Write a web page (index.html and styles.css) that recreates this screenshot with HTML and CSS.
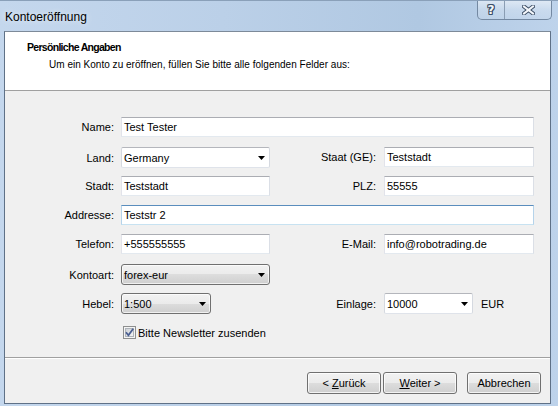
FILE: index.html
```html
<!DOCTYPE html>
<html lang="de">
<head>
<meta charset="utf-8">
<title>Kontoeröffnung</title>
<link rel="stylesheet" href="styles.css">
</head>
<body>
<div class="window">
  <div class="titlebar">
    <span class="title">Kontoeröffnung</span>
    <div class="caps">
      <div class="cap help"><span class="qmark">?</span></div>
      <div class="cap close">
        <svg width="13" height="10" viewBox="0 0 13 10">
          <line x1="2" y1="1.5" x2="11" y2="8.5" stroke="#3d4f66" stroke-width="4" stroke-linecap="square"/>
          <line x1="11" y1="1.5" x2="2" y2="8.5" stroke="#3d4f66" stroke-width="4" stroke-linecap="square"/>
          <line x1="2" y1="1.5" x2="11" y2="8.5" stroke="#f4f7fb" stroke-width="2" stroke-linecap="square"/>
          <line x1="11" y1="1.5" x2="2" y2="8.5" stroke="#f4f7fb" stroke-width="2" stroke-linecap="square"/>
        </svg>
      </div>
    </div>
  </div>
  <div class="client">
    <div class="header">
      <div class="h-title">Persönliche Angaben</div>
      <div class="h-sub">Um ein Konto zu eröffnen, füllen Sie bitte alle folgenden Felder aus:</div>
    </div>
    <div class="content">
      <div class="form">
        <div class="lbl r1">Name:</div>
        <div class="tb span3 r1">Test Tester</div>

        <div class="lbl h21 r2">Land:</div>
        <div class="combo white r2"><span>Germany</span><svg class="arr" width="7" height="4" viewBox="0 0 7 4"><polygon points="0,0 7,0 3.5,4" fill="#000"/></svg></div>
        <div class="lbl lbl2 r2">Staat (GE):</div>
        <div class="tb r2">Teststadt</div>

        <div class="lbl r3">Stadt:</div>
        <div class="tb r3">Teststadt</div>
        <div class="lbl lbl2 r3">PLZ:</div>
        <div class="tb r3">55555</div>

        <div class="lbl r4">Addresse:</div>
        <div class="tb focus span3 r4">Teststr 2</div>

        <div class="lbl r5">Telefon:</div>
        <div class="tb r5">+555555555</div>
        <div class="lbl lbl2 r5">E-Mail:</div>
        <div class="tb r5">info@robotrading.de</div>

        <div class="lbl h21 r6">Kontoart:</div>
        <div class="combo btn r6"><span>forex-eur</span><svg class="arr" width="7" height="4" viewBox="0 0 7 4"><polygon points="0,0 7,0 3.5,4" fill="#000"/></svg></div>

        <div class="lbl h21 r7">Hebel:</div>
        <div class="combo btn w90 r7"><span>1:500</span><svg class="arr" width="7" height="4" viewBox="0 0 7 4"><polygon points="0,0 7,0 3.5,4" fill="#000"/></svg></div>
        <div class="lbl lbl2 h21 r7">Einlage:</div>
        <div class="einlage r7">
          <div class="combo white w89"><span>10000</span><svg class="arr" width="7" height="4" viewBox="0 0 7 4"><polygon points="0,0 7,0 3.5,4" fill="#000"/></svg></div>
          <span class="eur">EUR</span>
        </div>

        <div class="check span3 r8">
          <svg width="13" height="13" viewBox="0 0 13 13">
            <defs>
              <linearGradient id="cbg" x1="0" y1="0" x2="1" y2="1">
                <stop offset="0" stop-color="#cbcfd5"/>
                <stop offset="1" stop-color="#f6f6f6"/>
              </linearGradient>
            </defs>
            <rect x="0.5" y="0.5" width="12" height="12" fill="#f4f4f4" stroke="#8e8f8f"/>
            <rect x="2.5" y="2.5" width="8" height="8" fill="url(#cbg)" stroke="#aeb3b9"/>
            <path d="M3 6.3 L5.4 9.2 L10.2 2.8" fill="none" stroke="#4a5f92" stroke-width="1.8"/>
          </svg>
          <span class="check-lbl">Bitte Newsletter zusenden</span>
        </div>
      </div>
    </div>
    <div class="footer">
      <div class="button"><span>&lt; <u>Z</u>urück</span></div>
      <div class="button next"><span><u>W</u>eiter &gt;</span></div>
      <div class="button cancel"><span>Abbrechen</span></div>
    </div>
  </div>
</div>
</body>
</html>
```
FILE: styles.css
```css
* { box-sizing: border-box; }
html, body { margin: 0; padding: 0; }
body {
  width: 558px;
  height: 406px;
  overflow: hidden;
  font-family: "Liberation Sans", Arial, sans-serif;
  font-size: 11px;
  color: #000;
}
.window {
  width: 558px;
  height: 406px;
  display: flex;
  flex-direction: column;
  background: linear-gradient(to right, #c4d7ed 0%, #bbd0e8 40%, #b0c8e2 75%, #bed3eb 100%);
  border-top: 1px solid #8aa0b9;
}
.titlebar {
  height: 30px;
  display: flex;
  align-items: flex-start;
}
.title {
  font-size: 12px;
  line-height: 15px;
  margin: 9px 0 0 5px;
  color: #000;
  text-shadow: 0 0 6px rgba(255,255,255,0.8);
}
.caps {
  display: flex;
  height: 19px;
  margin-left: auto;
  margin-right: 6px;
  border: 1px solid #7489a2;
  border-top: 0;
  border-radius: 0 0 5px 5px;
  background: linear-gradient(rgba(255,255,255,0.5), rgba(255,255,255,0.2) 50%, rgba(255,255,255,0.1));
  overflow: hidden;
}
.cap {
  display: flex;
  align-items: center;
  justify-content: center;
}
.help {
  width: 27px;
  border-right: 1px solid #8a9db3;
}
.close { width: 46px; }
.qmark {
  font-family: "DejaVu Sans", sans-serif;
  font-weight: bold;
  font-size: 12px;
  line-height: 12px;
  color: #f4f7fb;
  text-shadow: 1px 0 #3d4f66, -1px 0 #3d4f66, 0 1px #3d4f66, 0 -1px #3d4f66,
               1px 1px #3d4f66, -1px -1px #3d4f66, 1px -1px #3d4f66, -1px 1px #3d4f66;
}
.client {
  flex: 1;
  margin: 0 7px 2px 4px;
  border: 1px solid #5f7187;
  border-top-color: #7d8a99;
  display: flex;
  flex-direction: column;
  background: #f0f0f0;
}
.header {
  height: 59px;
  background: #fff;
  border-bottom: 1px solid #a0a0a0;
  padding: 9px 0 0 22px;
}
.h-title {
  font-weight: bold;
  font-size: 10.5px;
  letter-spacing: -0.7px;
  line-height: 13px;
}
.h-sub {
  font-size: 10px;
  letter-spacing: 0.02px;
  line-height: 13px;
  margin-top: 4px;
  padding-left: 22px;
}
.content {
  height: 267px;
  border-bottom: 1px solid #a0a0a0;
  padding-top: 26px;
}
.form {
  display: grid;
  grid-template-columns: 116px 149px 114px 150px;
  grid-template-rows: 30px 29px 29px 29px 30px 29px 33px 13px;
  align-items: start;
}
.r1 { grid-row: 1; }
.r2 { grid-row: 2; }
.r3 { grid-row: 3; }
.r4 { grid-row: 4; }
.r5 { grid-row: 5; }
.r6 { grid-row: 6; }
.r7 { grid-row: 7; }
.r8 { grid-row: 8; }
.span3 { grid-column: 2 / 5; }
.lbl {
  grid-column: 1;
  height: 20px;
  display: flex;
  align-items: center;
  justify-content: flex-end;
  padding-right: 7px;
  white-space: nowrap;
}
.lbl2 {
  grid-column: 3;
  padding-right: 8px;
}
.h21 { height: 21px; }
.tb {
  height: 20px;
  border: 1px solid;
  border-color: #abadb3 #dbdfe6 #e3e9ef #e2e3ea;
  background: #fff;
  padding-left: 2px;
  display: flex;
  align-items: center;
  white-space: nowrap;
}
.tb.focus {
  border-color: #5a8dbd #b5d3ea #c7e2f1 #b5d3ea;
}
.combo {
  height: 21px;
  display: flex;
  align-items: center;
  justify-content: space-between;
  padding: 0 4px 0 2px;
  white-space: nowrap;
}
.combo.white {
  border: 1px solid;
  border-color: #b4b6bc #d5d9e0 #dfe3ea #d5d9e0;
  border-radius: 2px;
  background: #fff;
}
.combo.btn {
  border: 1px solid #707070;
  border-radius: 3px;
  background: linear-gradient(#f2f2f2 0%, #ebebeb 50%, #dddddd 50%, #cfcfcf 100%);
  box-shadow: inset 0 0 0 1px rgba(255,255,255,0.7);
}
.w90 { width: 90px; }
.w89 { width: 89px; }
.arr { flex: none; }
.einlage {
  grid-column: 4;
  display: flex;
  align-items: center;
}
.eur { margin-left: 8px; }
.check {
  display: flex;
  align-items: center;
  height: 13px;
  padding-left: 2px;
}
.check svg { flex: none; }
.check-lbl {
  margin-left: 2px;
  white-space: nowrap;
}
.footer {
  flex: 1;
  border-top: 1px solid #fff;
  display: flex;
  justify-content: flex-end;
  align-items: flex-start;
  padding: 13px 9px 0 0;
}
.button {
  width: 74px;
  height: 22px;
  border: 1px solid #707070;
  border-radius: 3px;
  background: linear-gradient(#f2f2f2 0%, #ebebeb 50%, #dddddd 50%, #cfcfcf 100%);
  box-shadow: inset 0 0 0 1px rgba(255,255,255,0.75);
  display: flex;
  align-items: center;
  justify-content: center;
  white-space: nowrap;
}
.next { margin-left: 2px; }
.cancel { margin-left: 10px; }
```
